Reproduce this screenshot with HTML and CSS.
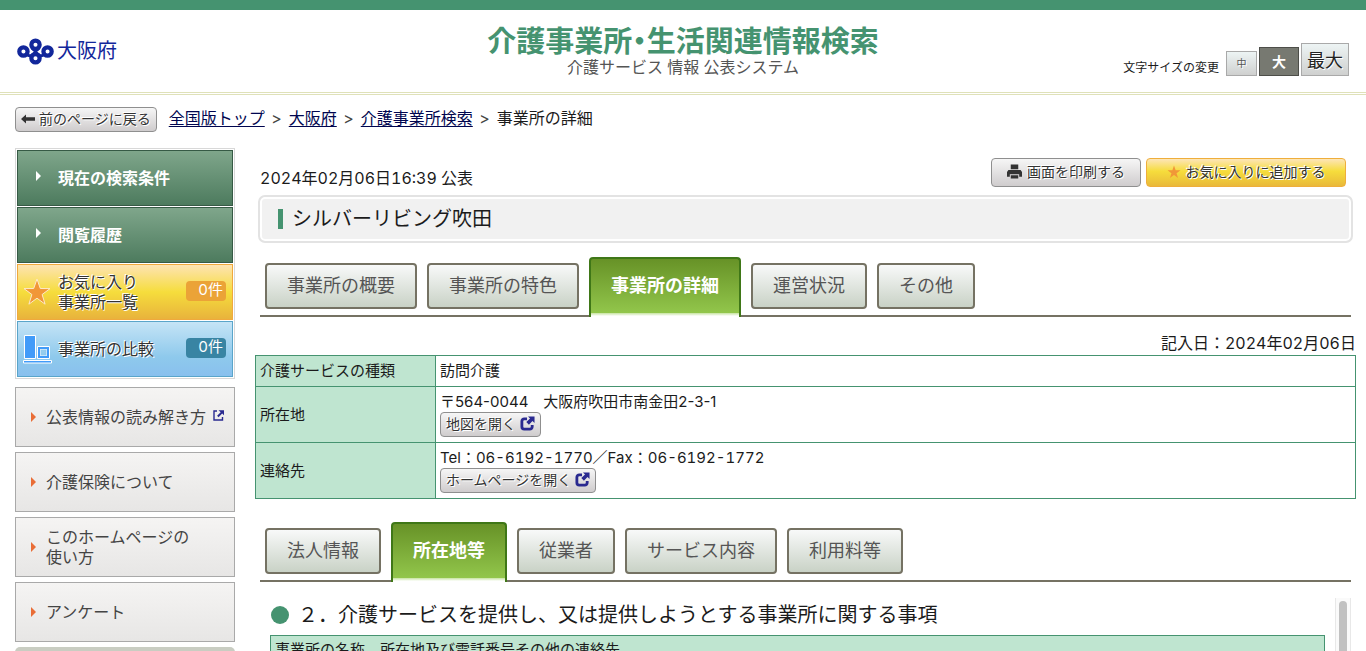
FILE: index.html
```html
<!DOCTYPE html>
<html lang="ja">
<head>
<meta charset="utf-8">
<meta name="viewport" content="width=device-width, initial-scale=1">
<title>事業所の詳細 | 介護事業所・生活関連情報検索</title>
<link rel="stylesheet" href="styles.css">
</head>
<body>
<svg class="sprite" aria-hidden="true">
  <symbol id="star" viewBox="0 0 28 28"><path d="M14 1l3.300 9.500 9.700.1-7.900 5.900 3 9.700-8.100-6-8.100 6 3-9.700L1 10.600l9.700-.1z"/></symbol>
  <symbol id="open" viewBox="0 0 16 16"><path d="M7.500 3H4.500a2.500 2.500 0 0 0-2.500 2.500v6a2.500 2.500 0 0 0 2.500 2.500h6a2.500 2.500 0 0 0 2.500-2.500V9.500" fill="none" stroke="currentColor" stroke-width="3"/><path d="M8.500.5H15.500v7l-2.200-2.200-3.800 4-2.800-2.800 4-3.800z" fill="currentColor"/></symbol>
</svg>

<header class="header">
  <a class="brand" href="#">
    <svg class="brand-mark" viewBox="0 0 38 28" aria-hidden="true">
      <g fill="none" stroke="currentColor" stroke-width="4.400"><circle cx="19" cy="7" r="4.300"/><circle cx="6.500" cy="14" r="4.300"/><circle cx="31.500" cy="14" r="4.300"/><circle cx="19" cy="21" r="4.300"/><path d="M10 17c3 3 6 1 9-3 3 4 6 6 9 3M15 10l4 4 4-4" stroke-width="3"/></g>
    </svg>
    <span>大阪府</span>
  </a>
  <div class="site-title">
    <p class="site-name">介護事業所<span class="dot">・</span>生活関連情報検索</p>
    <p class="site-sub">介護サービス 情報 公表システム</p>
  </div>
  <div class="text-size">
    <span class="text-size-label">文字サイズの変更</span>
    <button class="size size-m" type="button">中</button>
    <button class="size size-l" type="button" aria-pressed="true">大</button>
    <button class="size size-xl" type="button">最大</button>
  </div>
</header>

<nav class="crumbs" aria-label="パンくず">
  <button class="btn btn-small" type="button"><svg class="icon-back" viewBox="0 0 14 10" aria-hidden="true"><path d="M0 5l5-4.500v2.700h9v3.600H5v2.700z"/></svg>前のページに戻る</button>
  <ol class="crumb-list">
    <li><a href="#">全国版トップ</a></li>
    <li><a href="#">大阪府</a></li>
    <li><a href="#">介護事業所検索</a></li>
    <li>事業所の詳細</li>
  </ol>
</nav>

<div class="page">
  <aside class="side">
    <div class="side-tools">
      <a class="tool tool-green" href="#"><span class="tool-icon"><svg class="caret" viewBox="0 0 5 10" aria-hidden="true"><path d="M0 0l5 5-5 5z"/></svg></span>現在の検索条件</a>
      <a class="tool tool-green" href="#"><span class="tool-icon"><svg class="caret" viewBox="0 0 5 10" aria-hidden="true"><path d="M0 0l5 5-5 5z"/></svg></span>閲覧履歴</a>
      <a class="tool tool-yellow" href="#"><span class="tool-icon"><svg class="star-large" aria-hidden="true"><use href="#star"/></svg></span><span>お気に入り<br>事業所一覧</span><span class="badge">0件</span></a>
      <a class="tool tool-blue" href="#"><span class="tool-icon"><svg class="compare" viewBox="0 0 30 30" aria-hidden="true"><g stroke="#fff" stroke-width="1"><path fill="#419bf9" d="M2.500 1.500h11v23h-11zM1.500 26.500h28v2.500h-28z"/><path fill="#419bf9" fill-rule="evenodd" d="M15.500 12.500h12v12h-12zM18.500 15.500v6h6v-6z"/></g><path fill="none" stroke="#8fc9ee" d="M19 16h5v5h-5z"/></svg></span>事業所の比較<span class="badge">0件</span></a>
    </div>
    <ul class="side-links">
      <li><a href="#"><svg class="caret caret-orange" viewBox="0 0 5 10" aria-hidden="true"><path d="M0 0l5 5-5 5z"/></svg>公表情報の読み解き方<svg class="external" viewBox="0 0 11 11" aria-hidden="true"><path fill="none" stroke="currentColor" stroke-width="1.400" d="M4 1H1v9h8.500V7"/><path fill="currentColor" d="M5.500.3H11v5L9.200 3.500 5.500 7.200 4.100 5.800l3.600-3.600z"/></svg></a></li>
      <li><a href="#"><svg class="caret caret-orange" viewBox="0 0 5 10" aria-hidden="true"><path d="M0 0l5 5-5 5z"/></svg>介護保険について</a></li>
      <li><a href="#"><svg class="caret caret-orange" viewBox="0 0 5 10" aria-hidden="true"><path d="M0 0l5 5-5 5z"/></svg><span>このホームページの<br>使い方</span></a></li>
      <li><a href="#"><svg class="caret caret-orange" viewBox="0 0 5 10" aria-hidden="true"><path d="M0 0l5 5-5 5z"/></svg>アンケート</a></li>
    </ul>
    <div class="side-panel"></div>
  </aside>

  <main class="main">
    <div class="topline">
      <p class="published">2024年02月06日16:39 公表</p>
      <div class="actions">
        <button class="btn btn-print" type="button"><svg class="icon-print" viewBox="0 0 16 15" aria-hidden="true"><path d="M4 0h8v5H4zM1.500 6h13L16 8v5h-3v-2.500H3V13H0V8zM4 11.500h8V15H4z"/></svg>画面を印刷する</button>
        <button class="btn btn-favorite" type="button"><svg class="star-small" aria-hidden="true"><use href="#star"/></svg>お気に入りに追加する</button>
      </div>
    </div>
    <h1 class="facility">シルバーリビング吹田</h1>

    <nav class="tabs" aria-label="事業所の情報">
      <a href="#">事業所の概要</a>
      <a href="#">事業所の特色</a>
      <a href="#" class="current" aria-current="page">事業所の詳細</a>
      <a href="#">運営状況</a>
      <a href="#">その他</a>
    </nav>

    <p class="entry-date">記入日：2024年02月06日</p>
    <table class="info">
      <tr><th scope="row">介護サービスの種類</th><td>訪問介護</td></tr>
      <tr><th scope="row">所在地</th><td class="address">〒564-0044　大阪府吹田市南金田2-3-1<br><button class="btn btn-small" type="button">地図を開く<svg class="icon-open" aria-hidden="true"><use href="#open"/></svg></button></td></tr>
      <tr><th scope="row">連絡先</th><td>Tel：06-6192-1770／Fax：06-6192-1772<br><button class="btn btn-small" type="button">ホームページを開く<svg class="icon-open" aria-hidden="true"><use href="#open"/></svg></button></td></tr>
    </table>

    <nav class="tabs tabs-detail" aria-label="詳細の項目">
      <a href="#">法人情報</a>
      <a href="#" class="current" aria-current="page">所在地等</a>
      <a href="#">従業者</a>
      <a href="#">サービス内容</a>
      <a href="#">利用料等</a>
    </nav>

    <div class="detail">
      <section class="detail-body">
        <h2 class="section-title">２．介護サービスを提供し、又は提供しようとする事業所に関する事項</h2>
        <table class="section-table">
          <tr><th>事業所の名称、所在地及び電話番号その他の連絡先</th></tr>
        </table>
      </section>
      <div class="scroll-track"><div class="scroll-thumb"></div></div>
    </div>
  </main>
</div>
</body>
</html>
```

FILE: styles.css
```css
* { box-sizing: border-box; }
html { scrollbar-width: none; }
body {
  margin: 0;
  background: #fff;
  color: #1b1b1b;
  font: 16px/20px Inter, "Noto Sans CJK JP", sans-serif;
  font-variant-numeric: tabular-nums;
}
p, h1, h2, ol, ul { margin: 0; padding: 0; }
ol, ul { list-style: none; }
a { color: #00054f; }
button { font-family: inherit; cursor: pointer; }
.sprite { display: none; }

/* Header */
.header {
  display: grid;
  grid-template-columns: 1fr auto 1fr;
  height: 95px;
  padding: 0 17px;
  border-top: 10px solid #459370;
  border-bottom: 3px double #dfe1b9;
}
.brand {
  display: flex;
  align-items: center;
  gap: 3px;
  color: #12279b;
  font-size: 20px;
  text-decoration: none;
}
.brand-mark { width: 37px; height: 27px; }
.site-title { padding-top: 15px; text-align: center; }
.site-name { color: #459370; font-size: 29px; font-weight: 700; line-height: 34px; }
.dot { font-feature-settings: "halt"; }
.site-sub { color: #555; font-size: 16px; line-height: 16px; }
.text-size {
  display: flex;
  align-items: flex-end;
  justify-content: flex-end;
  gap: 2px;
  padding-bottom: 16px;
}
.text-size-label { margin-right: 5px; font-size: 12px; line-height: 16px; }
.size {
  padding: 0 0 2px;
  border: 1px solid #a9a9a9;
  background: linear-gradient(#edf4f4, #cfd0cf);
  color: #222;
  text-shadow: 1px 1px 0 #fff;
}
.size-m { width: 31px; height: 25px; color: #555; font-size: 10px; }
.size-l {
  width: 40px;
  height: 29px;
  border-color: #4d4e49;
  background: #777971;
  color: #fff;
  font-size: 14px;
  font-weight: 700;
  text-shadow: none;
}
.size-xl { width: 48px; height: 33px; font-size: 18px; }

/* Buttons */
.btn {
  display: inline-flex;
  align-items: center;
  justify-content: center;
  gap: 5px;
  height: 29px;
  padding: 0 5px 2px;
  border: 1px solid #8f8f8f;
  border-radius: 4px;
  background: linear-gradient(#f6f6f6, #cfcccd);
  color: #333;
  font-size: 14px;
  line-height: 20px;
  text-shadow: 1px 1px 0 #fff, -1px -1px 0 #fff;
  white-space: nowrap;
}
.btn-small { gap: 4px; height: 25px; }
.btn-print { width: 150px; }
.btn-favorite {
  width: 200px;
  border-color: #efae3b;
  background: linear-gradient(#fde5b8, #f6dd3c 45%, #e9b93a);
}
.icon-back { width: 14px; height: 10px; fill: #333; }
.icon-print { width: 15px; height: 15px; fill: #333; }
.icon-open { width: 15px; height: 15px; color: #2a2a90; }
.star-small { width: 14px; height: 14px; fill: #f19738; }

/* Breadcrumb */
.crumbs { display: flex; align-items: center; gap: 12px; padding: 12px 15px 0; }
.crumb-list { display: flex; padding-bottom: 3px; }
.crumb-list li + li::before { content: ">"; display: inline-block; width: 24px; text-align: center; color: #444; }
.crumb-list a { text-underline-offset: 2px; }

/* Columns */
.page { display: flex; align-items: flex-start; gap: 20px; padding: 16px 10px 20px 15px; }
.side { flex: 0 0 220px; }
.main { flex: 1; min-width: 0; padding-top: 10px; }

/* Sidebar */
.side-tools {
  display: grid;
  gap: 1px;
  padding: 1px;
  border: 1px solid #d8d8d8;
}
.tool {
  display: flex;
  align-items: center;
  height: 56px;
  padding-right: 6px;
  border: 1px solid;
  color: #333;
  text-decoration: none;
}
.tool-icon { display: flex; flex: 0 0 40px; justify-content: center; padding-right: 2px; }
.tool-green {
  border-color: #365a45;
  background: linear-gradient(#7fa68b, #4d7b5e);
  color: #fff;
  font-weight: 700;
}
.tool-green .tool-icon { padding: 0 0 5px; }
.tool-yellow {
  border-color: #f0a93c;
  background: linear-gradient(#fde3b3, #f6dd3c 50%, #e8b33c);
  text-shadow: 1px 1px 0 #fff, -1px -1px 0 #fff;
}
.tool-blue {
  border-color: #5aa5ca;
  background: linear-gradient(#c5e4f6, #8ec9ec 65%, #89c0ee);
  text-shadow: 1px 1px 0 #fff, -1px -1px 0 #fff;
}
.badge {
  width: 40px;
  height: 20px;
  margin: 0 0 2px auto;
  padding-right: 3px;
  border-radius: 4px;
  background: #eba337;
  color: #fff;
  font-size: 15px;
  line-height: 18px;
  text-align: right;
  text-shadow: none;
}
.tool-blue .badge { background: #3884a3; }
.star-large { width: 28px; height: 28px; fill: #f19738; stroke: #fde9c9; }
.compare { width: 30px; height: 30px; }
.caret { width: 5px; height: 10px; fill: #fff; }
.caret-orange { flex: none; margin-right: 10px; fill: #e96d36; }
.side-links { display: grid; gap: 5px; margin-top: 8px; }
.side-links a {
  display: flex;
  align-items: center;
  height: 60px;
  padding-left: 15px;
  border: 1px solid #a9a9a9;
  background: linear-gradient(#f5f4f3, #e7e6e5);
  color: #444;
  text-decoration: none;
}
.external { width: 11px; height: 11px; margin: 0 0 4px 7px; color: #2a2a90; }
.side-panel { height: 40px; margin-top: 5px; border-radius: 5px; background: #c9cdc2; }

/* Facility heading */
.topline {
  display: flex;
  align-items: flex-start;
  justify-content: space-between;
  padding: 0 10px 0 5px;
}
.published { padding-top: 10px; }
.actions { display: flex; gap: 5px; }
.facility {
  display: flex;
  align-items: center;
  gap: 9px;
  height: 48px;
  margin: 7px 3px 0;
  padding: 0 18px;
  border: 2px solid #e3e3e3;
  border-radius: 7px;
  background: #f1f1f1;
  box-shadow: inset 0 0 0 2px #fff;
  font-size: 20px;
  font-weight: 400;
}
.facility::before { content: ""; width: 5px; height: 20px; background: #459370; }

/* Tabs */
.tabs {
  display: flex;
  align-items: flex-end;
  gap: 10px;
  height: 60px;
  margin: 14px 5px 0;
  padding-left: 5px;
  border-bottom: 2px solid #757263;
}
.tabs a {
  height: 46px;
  margin-bottom: 6px;
  padding: 0 20px;
  border: 2px solid #757263;
  border-radius: 4px;
  background: linear-gradient(#f8f9f9, #c9d2c6);
  color: #555;
  font-size: 18px;
  line-height: 42px;
  text-decoration: none;
  white-space: nowrap;
}
.tabs .current {
  height: 60px;
  margin-bottom: -2px;
  border-color: #3f7717;
  border-bottom: 0;
  border-radius: 4px 4px 0 0;
  background: linear-gradient(#679227, #92c64b 54px, #c6e39f 54px, #fff 57px);
  color: #fff;
  font-weight: 700;
  line-height: 54px;
}
.tabs-detail { margin-top: 23px; }

/* Facility table */
.entry-date { margin-top: 16px; text-align: right; }
.info, .section-table {
  width: 100%;
  border-collapse: collapse;
  font-size: 15px;
  line-height: 20px;
}
.info { margin-top: 2px; }
.info th, .info td { padding: 5px 4px; border: 1px solid #459370; text-align: left; }
.info th { width: 180px; }
.info th, .section-table th { background: #bfe5d0; font-weight: 400; }
.info .address { font-variant-numeric: normal; }
.info .btn { margin: 0; vertical-align: top; }

/* Detail panel */
.detail { display: flex; justify-content: space-between; margin: 16px 5px 0; }
.detail-body { flex: 1; padding: 0 10px; }
.section-title {
  display: flex;
  align-items: center;
  gap: 9px;
  height: 37px;
  padding-bottom: 3px;
  font-size: 20px;
  font-weight: 400;
}
.section-title::before { content: ""; width: 18px; height: 18px; margin-left: 1px; border-radius: 50%; background: #459370; }
.section-table th { padding: 4px; border: 1px solid #459370; text-align: left; }
.scroll-track { flex: 0 0 15px; padding: 3px 3px 0; border: solid #e8e8e8; border-width: 0 1px; background: #fafafa; }
.scroll-thumb { width: 8px; height: 80px; border-radius: 4px; background: #c1c1c1; }
```
